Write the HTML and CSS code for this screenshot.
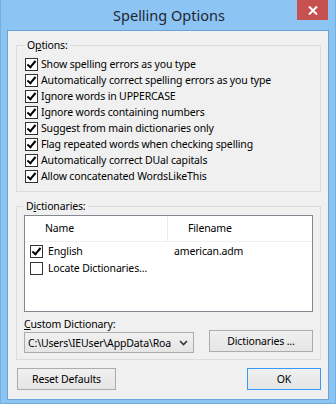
FILE: index.html
```html
<!DOCTYPE html>
<html>
<head>
<meta charset="utf-8">
<link rel="stylesheet" href="styles.css">
</head>
<body>
<div class="window">
  <div class="titlebar">
    <div class="title">Spelling Options</div>
    <div class="close">
      <svg width="10" height="9" viewBox="0 0 10 9"><path d="M1 0.5 L9 8.5 M9 0.5 L1 8.5" stroke="#fff" stroke-width="2" fill="none"/></svg>
    </div>
  </div>
  <div class="client">
    <fieldset class="group options">
      <legend>O<u>p</u>tions:</legend>
      <div class="row"><span class="cb checked"></span><span>Show spelling errors as you type</span></div>
      <div class="row"><span class="cb checked"></span><span>Automatically correct spelling errors as you type</span></div>
      <div class="row"><span class="cb checked"></span><span>Ignore words in UPPERCASE</span></div>
      <div class="row"><span class="cb checked"></span><span>Ignore words containing numbers</span></div>
      <div class="row"><span class="cb checked"></span><span>Suggest from main dictionaries only</span></div>
      <div class="row"><span class="cb checked"></span><span>Flag repeated words when checking spelling</span></div>
      <div class="row"><span class="cb checked"></span><span>Automatically correct DUal capitals</span></div>
      <div class="row"><span class="cb checked"></span><span>Allow concatenated WordsLikeThis</span></div>
    </fieldset>
    <fieldset class="group dicts">
      <legend>D<u>i</u>ctionaries:</legend>
      <div class="listbox">
        <div class="lv-head">
          <div class="col c1">Name</div>
          <div class="col c2">Filename</div>
        </div>
        <div class="lv-row">
          <div class="c1 cell"><span class="cb checked"></span><span>English</span></div>
          <div class="c2 cell">american.adm</div>
        </div>
        <div class="lv-row">
          <div class="c1 cell"><span class="cb"></span><span>Locate Dictionaries…</span></div>
        </div>
      </div>
      <div class="label"><u>C</u>ustom Dictionary:</div>
      <div class="combo-row">
        <div class="combo">
          <span class="combo-text">C:\Users\IEUser\AppData\Roa</span>
          <svg class="chev" width="9" height="6" viewBox="0 0 9 6"><path d="M1 1 L4.5 4.5 L8 1" stroke="#333" stroke-width="1.6" fill="none"/></svg>
        </div>
        <div class="btn dict-btn">Dictionaries ...</div>
      </div>
    </fieldset>
    <div class="footer">
      <div class="btn reset">Reset Defaults</div>
      <div class="btn ok">OK</div>
    </div>
  </div>
</div>
</body>
</html>
```
FILE: styles.css
```css
html, body {
  margin: 0;
  padding: 0;
}
body {
  width: 336px;
  height: 404px;
  overflow: hidden;
  font-family: "Noto Sans", "Open Sans", sans-serif;
  font-size: 10.5px;
  letter-spacing: -0.15px;
  color: #000;
  background: #8cc4f4;
}
.window {
  width: 336px;
  height: 404px;
  box-sizing: border-box;
  padding: 0 7px 4px 7px;
  background: #8cc4f4;
  border: 1px solid #76aee4;
  border-top: none;
}
.titlebar {
  height: 30px;
  display: flex;
  align-items: flex-start;
  justify-content: center;
  position: relative;
}
.title {
  font-size: 14.5px;
  letter-spacing: 0;
  line-height: 30px;
  color: #1e2832;
  margin-left: 2px;
}
.close {
  position: absolute;
  right: 0px;
  top: 0;
  width: 31px;
  height: 20px;
  background: #c75050;
  display: flex;
  align-items: center;
  justify-content: center;
}
.client {
  width: 305px;
  height: 368px;
  margin-left: -1px;
  background: #f0f0f0;
  border: 1px solid #6aa4da;
  padding: 0 7px 0 8px;
  box-sizing: content-box;
  display: flex;
  flex-direction: column;
}
.group {
  margin: 6px 0 0 0;
  border: 1px solid #dcdcdc;
  min-width: 0;
}
.group legend {
  padding: 0 2px;
  line-height: 16px;
  height: 16px;
}
.options {
  padding: 3px 8px 7px 8px;
}
.row {
  display: flex;
  align-items: flex-start;
  height: 16px;
  line-height: 16px;
  white-space: nowrap;
}
.row .cb {
  margin: 2px 3px 0 0;
}
.cb {
  width: 13px;
  height: 13px;
  box-sizing: border-box;
  border: 1px solid #333;
  background: #fff;
  flex: none;
  position: relative;
}
.cb.checked::after {
  content: "";
  position: absolute;
  left: 3px;
  top: 0px;
  width: 3px;
  height: 7px;
  border-right: 2px solid #000;
  border-bottom: 2px solid #000;
  transform: rotate(40deg);
}
.dicts {
  padding: 1px 7px 6px 7px;
}
.listbox {
  height: 97px;
  box-sizing: border-box;
  border: 1px solid #828790;
  background: #fff;
}
.lv-head {
  display: flex;
  height: 25px;
  border-bottom: 1px solid #f0f0f0;
}
.lv-head .col {
  line-height: 25px;
  padding-left: 20px;
  box-sizing: border-box;
}
.c1 {
  width: 143px;
  flex: none;
}
.lv-head .c1 {
  border-right: 1px solid #e5eef7;
}
.lv-row {
  display: flex;
  height: 17px;
  line-height: 17px;
}
.lv-head + .lv-row {
  margin-top: 1px;
}
.cell {
  display: flex;
  align-items: flex-start;
  white-space: nowrap;
}
.lv-row .c1 {
  padding-left: 5px;
  box-sizing: border-box;
}
.lv-row .c1 .cb {
  margin: 2px 5px 0 0;
}
.lv-row .c2 {
  padding-left: 6px;
}
.label {
  margin-top: 4px;
  line-height: 16px;
}
.combo-row {
  display: flex;
  justify-content: space-between;
  align-items: flex-start;
}
.combo {
  width: 170px;
  height: 21px;
  box-sizing: border-box;
  border: 1px solid #acacac;
  background: linear-gradient(#f0f0f0, #e5e5e5);
  display: flex;
  align-items: center;
  padding-left: 3px;
  white-space: nowrap;
  overflow: hidden;
}
.combo-text {
  flex: 1;
  overflow: hidden;
}
.chev {
  margin: 0 5px 0 2px;
  flex: none;
}
.btn {
  height: 22px;
  box-sizing: border-box;
  border: 1px solid #acacac;
  background: linear-gradient(#f0f0f0, #e5e5e5);
  display: flex;
  align-items: center;
  justify-content: center;
  white-space: nowrap;
}
.dict-btn {
  width: 104px;
  margin-top: -2px;
}
.footer {
  display: flex;
  justify-content: space-between;
  margin-top: 8px;
  margin-left: 1px;
}
.reset {
  width: 99px;
}
.ok {
  width: 74px;
  border-color: #3399ff;
}
```
